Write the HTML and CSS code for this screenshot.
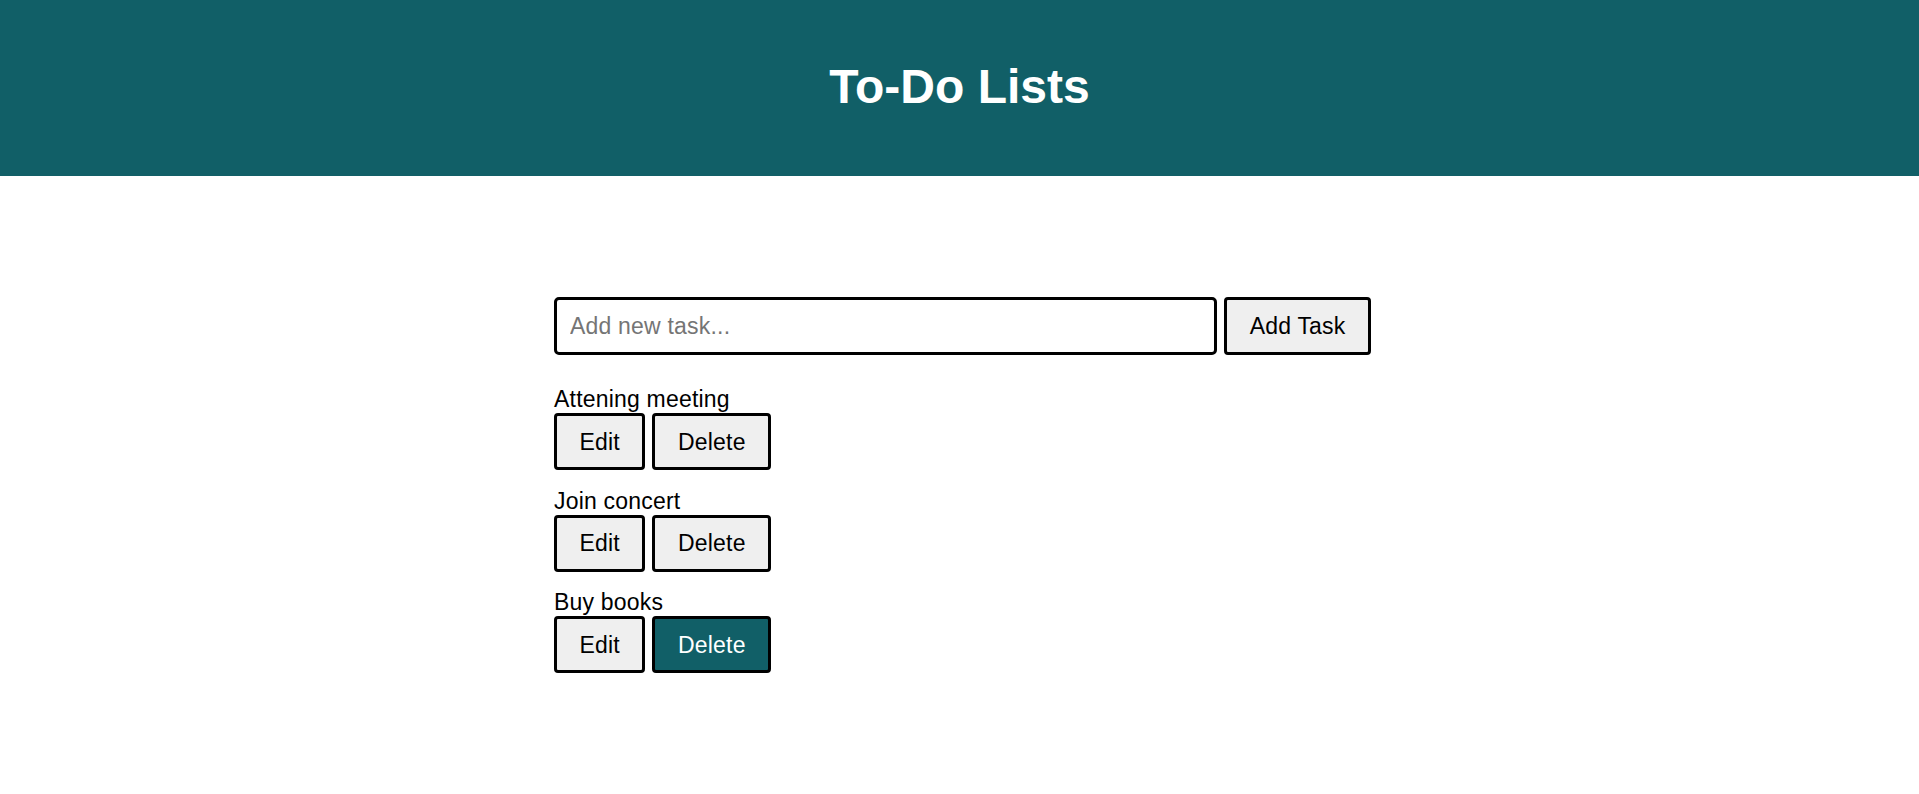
FILE: index.html
```html
<!DOCTYPE html>
<html lang="en">
<head>
<meta charset="utf-8">
<title>To-Do Lists</title>
<link rel="stylesheet" href="styles.css">
</head>
<body>
<header class="header">
  <h1 class="title">To-Do Lists</h1>
</header>
<main class="container">
  <div class="add-row">
    <input class="task-input" type="text" placeholder="Add new task...">
    <button class="btn">Add Task</button>
  </div>
  <ul class="task-list">
    <li class="task">
      <span class="task-name">Attening meeting</span>
      <div class="task-actions">
        <button class="btn">Edit</button>
        <button class="btn">Delete</button>
      </div>
    </li>
    <li class="task">
      <span class="task-name">Join concert</span>
      <div class="task-actions">
        <button class="btn">Edit</button>
        <button class="btn">Delete</button>
      </div>
    </li>
    <li class="task">
      <span class="task-name">Buy books</span>
      <div class="task-actions">
        <button class="btn">Edit</button>
        <button class="btn btn-active">Delete</button>
      </div>
    </li>
  </ul>
</main>
</body>
</html>
```

FILE: styles.css
```css
html, body {
  margin: 0;
  padding: 0;
  background: #ffffff;
  font-family: "Liberation Sans", Arial, sans-serif;
  color: #000000;
}

.header {
  background: #115f67;
  padding: 59px 0 62px;
  text-align: center;
}

.title {
  margin: 0;
  font-size: 48px;
  font-weight: bold;
  color: #ffffff;
  line-height: 55px;
}

.container {
  width: 823px;
  margin: 0 auto;
  padding: 121px 0 0 6px;
  box-sizing: border-box;
}

.add-row {
  display: flex;
  gap: 7px;
}

.task-input {
  flex: 1;
  min-width: 0;
  font-family: "Liberation Sans", Arial, sans-serif;
  font-size: 23px;
  letter-spacing: 0.2px;
  line-height: 26px;
  padding: 13px 13px;
  border: 3px solid #000000;
  border-radius: 5px;
  background: #ffffff;
  color: #000000;
  outline: none;
}

.task-input::placeholder {
  color: #757575;
}

.btn {
  font-family: "Liberation Sans", Arial, sans-serif;
  font-size: 23px;
  letter-spacing: 0.2px;
  line-height: 26px;
  padding: 12.5px 22.5px;
  border: 3px solid #000000;
  border-radius: 4px;
  background: #efefef;
  color: #000000;
  cursor: pointer;
}

.btn-active {
  background: #115f67;
  color: #ffffff;
}

.task-list {
  list-style: none;
  margin: 31px 0 0;
  padding: 0;
  display: flex;
  flex-direction: column;
  gap: 17.5px;
}

.task {
  display: flex;
  flex-direction: column;
  align-items: flex-start;
}

.task-name {
  font-size: 23px;
  letter-spacing: 0.2px;
  line-height: 27px;
}

.task-actions {
  display: flex;
  gap: 7px;
}
```
